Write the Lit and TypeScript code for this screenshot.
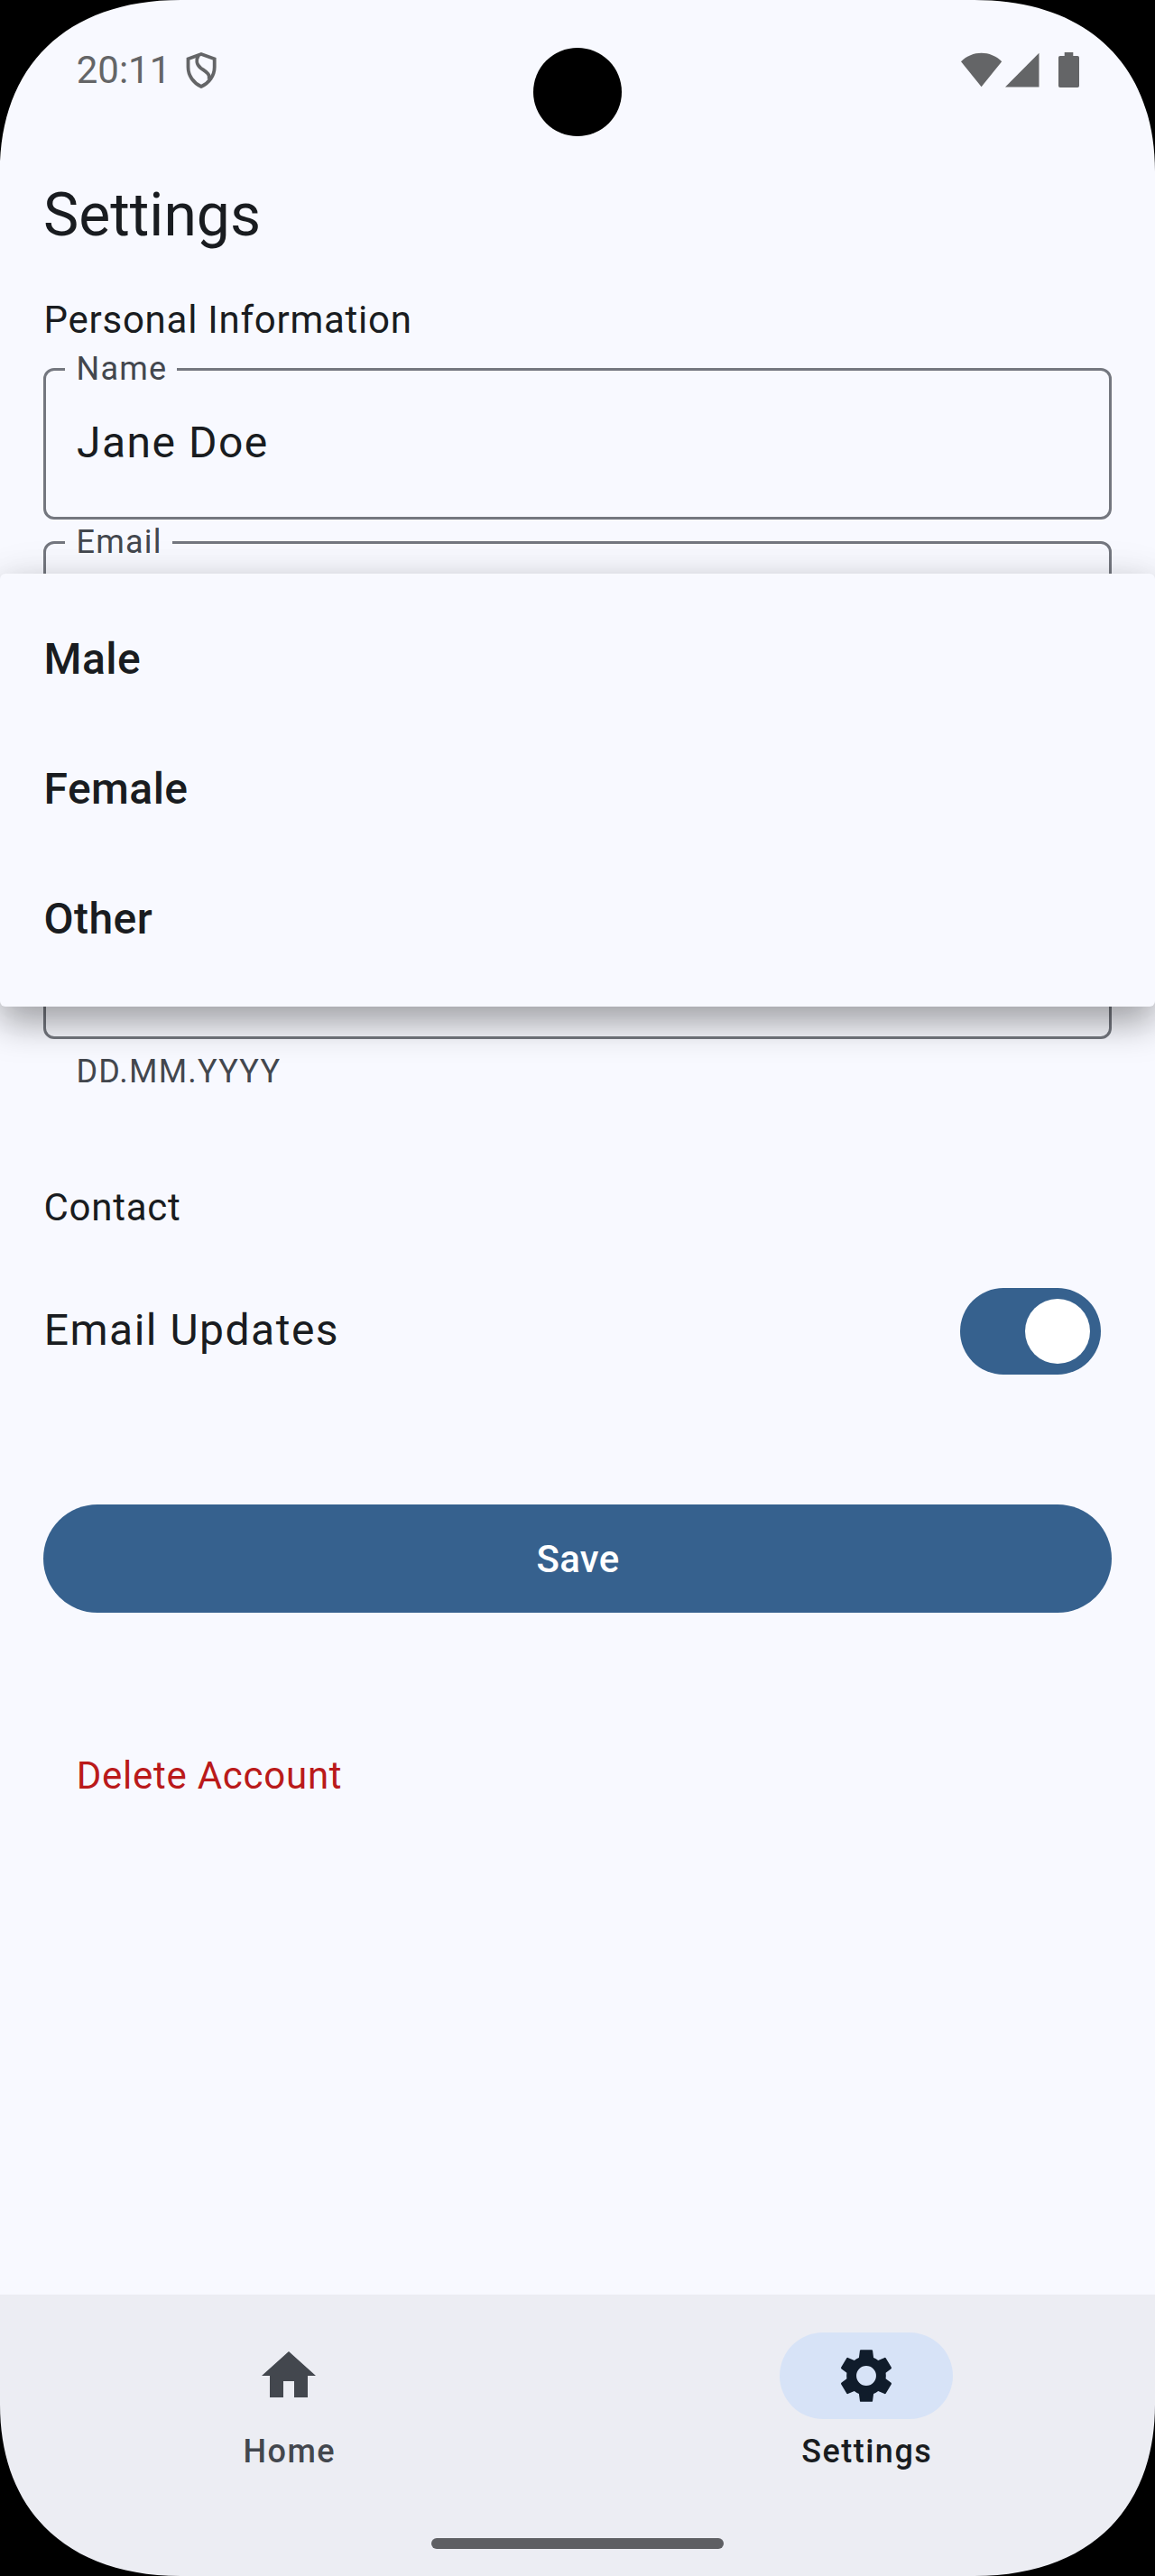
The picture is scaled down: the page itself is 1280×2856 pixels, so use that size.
import { LitElement, html, css, svg, nothing } from "lit";
import { customElement, property } from "lit/decorators.js";

@customElement("outlined-field")
class OutlinedField extends LitElement {
  @property() label = "";
  @property() value = "";
  @property() hint = "";

  static styles = css`
    :host { display: block; }
    .box {
      position: relative;
      box-sizing: border-box;
      height: 168px;
      border: 3px solid #74777f;
      border-radius: 12px;
      padding: 44px 34px 0;
    }
    .label {
      position: absolute;
      left: 21px;
      top: -26px;
      padding: 0 11px 0 12.5px;
      background: #f8f9ff;
      color: #43474e;
      font-size: 36px;
      line-height: 48px;
      letter-spacing: 1.2px;
      white-space: nowrap;
    }
    .value {
      font-size: 48px;
      line-height: 72px;
      letter-spacing: 1.5px;
      color: #191c20;
    }
    .hint {
      padding: 12px 36.5px 0;
      font-size: 36px;
      line-height: 48px;
      letter-spacing: 1.2px;
      color: #43474e;
    }
  `;

  render() {
    return html`
      <div class="box">
        ${this.label ? html`<span class="label">${this.label}</span>` : nothing}
        <div class="value">${this.value}</div>
      </div>
      ${this.hint ? html`<div class="hint">${this.hint}</div>` : nothing}
    `;
  }
}

const cornerPath = svg`<path d="M0 0H200C72 0 0 75 0 190Z" fill="#000" />`;

@customElement("app-root")
class AppRoot extends LitElement {
  static styles = css`
    :host {
      display: block;
      font-family: Roboto, "Liberation Sans", sans-serif;
      color: #191c20;
    }
    .screen {
      position: relative;
      display: flex;
      flex-direction: column;
      width: 1280px;
      height: 2856px;
      overflow: hidden;
      background: #f8f9ff;
    }
    .status {
      display: flex;
      justify-content: space-between;
      box-sizing: border-box;
      height: 156px;
      padding: 48px 84px 0;
      color: #646567;
    }
    .status-left { display: flex; align-items: flex-start; }
    .time { box-sizing: border-box; padding-left: 0.7px; font-size: 42px; line-height: 60px; width: 121px; }
    .shield { margin-top: 9px; }
    .signals { margin-top: 9px; }
    svg { display: block; }
    .camera {
      position: absolute;
      left: 591px;
      top: 53px;
      width: 98px;
      height: 98px;
      border-radius: 50%;
      background: #000;
    }
    .content { flex: 1; padding: 0 48px; }
    .title { margin: 41px 0 0; font-size: 66px; line-height: 84px; font-weight: 400; }
    .section { margin: 0; font-size: 42px; line-height: 60px; font-weight: 400; letter-spacing: 0.75px; padding-left: 0.5px; }
    .personal { margin-top: 44px; }
    .fields { display: flex; flex-direction: column; gap: 24px; margin-top: 23px; }
    .contact { margin-top: 97px; }
    .toggle-row {
      display: flex;
      justify-content: space-between;
      align-items: center;
      height: 96px;
      margin-top: 59px;
      padding-right: 12px;
    }
    .toggle-label { font-size: 48px; line-height: 72px; letter-spacing: 1.5px; padding: 0 0 2px 0.7px; }
    .switch {
      display: flex;
      justify-content: flex-end;
      align-items: center;
      box-sizing: border-box;
      width: 156px;
      height: 96px;
      padding: 12px;
      border-radius: 48px;
      background: #36618e;
    }
    .thumb { width: 72px; height: 72px; border-radius: 50%; background: #fff; }
    .save {
      display: flex;
      align-items: center;
      justify-content: center;
      box-sizing: border-box;
      width: 100%;
      height: 120px;
      margin-top: 144px;
      padding: 2px 0 0 1px;
      border: 0;
      border-radius: 60px;
      background: #36618e;
      color: #fff;
      font: 500 42px/60px Roboto, "Liberation Sans", sans-serif;
      letter-spacing: 0.3px;
    }
    .delete {
      margin-top: 151px;
      padding-left: 36.7px;
      font-size: 42px;
      line-height: 60px;
      letter-spacing: 0.75px;
      color: #ba1a1a;
    }
    .menu {
      position: absolute;
      left: 0;
      right: 0;
      top: 636px;
      height: 480px;
      box-sizing: border-box;
      padding: 24px 0;
      border-radius: 6px;
      background: #f8f9ff;
      box-shadow: 0 18px 40px rgba(0, 0, 0, 0.34), 0 0 50px rgba(0, 0, 0, 0.06);
    }
    .option {
      display: flex;
      align-items: center;
      box-sizing: border-box;
      height: 144px;
      padding: 0 48px 3px 48.5px;
      font-size: 48px;
      line-height: 72px;
      font-weight: 500;
      letter-spacing: 0.45px;
    }
    .nav {
      display: grid;
      grid-template-columns: 1fr 1fr;
      box-sizing: border-box;
      height: 270px;
      padding-top: 42px;
      background: #ecedf3;
    }
    .tab { display: flex; flex-direction: column; align-items: center; gap: 12px; color: #43474e; }
    .tab.active { color: #191c20; }
    .pill {
      display: flex;
      align-items: center;
      justify-content: center;
      width: 192px;
      height: 96px;
      border-radius: 48px;
    }
    .active .pill { background: #d7e3f7; color: #101c2b; }
    .tab-label { font-size: 36px; line-height: 48px; font-weight: 500; letter-spacing: 1.5px; padding-left: 1.5px; }
    .gesture { height: 42px; background: #ecedf3; display: flex; justify-content: center; }
    .handle { width: 324px; height: 12px; border-radius: 6px; background: #5e5f63; }
    .corner { position: absolute; width: 200px; height: 190px; }
    .tl { left: 0; top: 0; }
    .tr { right: 0; top: 0; transform: scaleX(-1); }
    .bl { left: 0; bottom: 0; transform: scaleY(-1); }
    .br { right: 0; bottom: 0; transform: scale(-1); }
  `;

  render() {
    return html`
      <div class="screen">
        <div class="status">
          <div class="status-left">
            <span class="time">20:11</span>
            <svg class="shield" width="36" height="42" viewBox="15 11 36 42" fill="none" stroke="currentColor" stroke-width="3.8">
              <path d="M33 14L47.7 19.3V28.5C47.7 38 41.5 46 33 50C24.500 46 18.500 38 18.500 28.500V19.300Z" />
              <path d="M30 15.500C27.200 20 27.500 25.500 32.500 29.500C38 33.500 43.500 36 41.500 42" />
            </svg>
          </div>
          <svg class="signals" width="134" height="42" viewBox="1062 57 134 42" fill="currentColor">
            <path d="M1065 68.300C1077.500 55.600 1097.700 55.600 1110.200 68.300L1087.600 96.200Z" />
            <path d="M1114 96.500L1151.500 58.700V96.500Z" />
            <path d="M1179.700 58H1189.300V62H1194.200Q1196 62 1196 63.800V95.200Q1196 97 1194.200 97H1174.800Q1173 97 1173 95.200V63.800Q1173 62 1174.800 62H1179.700Z" />
          </svg>
        </div>
        <div class="content">
          <h1 class="title">Settings</h1>
          <h2 class="section personal">Personal Information</h2>
          <div class="fields">
            <outlined-field label="Name" value="Jane Doe"></outlined-field>
            <outlined-field label="Email"></outlined-field>
            <outlined-field></outlined-field>
            <outlined-field hint="DD.MM.YYYY"></outlined-field>
          </div>
          <h2 class="section contact">Contact</h2>
          <div class="toggle-row">
            <span class="toggle-label">Email Updates</span>
            <span class="switch"><span class="thumb"></span></span>
          </div>
          <button class="save">Save</button>
          <div class="delete">Delete Account</div>
        </div>
        <nav class="nav">
          <div class="tab">
            <span class="pill">
              <svg width="72" height="72" viewBox="0 0 24 24" fill="currentColor">
                <path d="M10 20v-6h4v6h5v-8h3L12 3 2 12h3v8z" />
              </svg>
            </span>
            <span class="tab-label">Home</span>
          </div>
          <div class="tab active">
            <span class="pill">
              <svg width="72" height="72" viewBox="-12 -12 24 24" fill="currentColor" fill-rule="evenodd">
                <path d="M-2 -9.600H2Q2.300 -9.600 2.350 -9.300L2.700 -6.700Q3.600 -6.300 4.400 -5.700L6.800 -6.700Q7.100 -6.800 7.250 -6.500L9.300 -3.100Q9.400 -2.800 9.200 -2.600L7.200 -1.100Q7.350 0 7.200 1.100L9.200 2.600Q9.400 2.800 9.300 3.100L7.250 6.500Q7.100 6.800 6.800 6.700L4.400 5.700Q3.600 6.300 2.700 6.700L2.350 9.300Q2.300 9.600 2 9.600H-2Q-2.300 9.600 -2.350 9.300L-2.700 6.700Q-3.600 6.300 -4.400 5.700L-6.800 6.700Q-7.100 6.800 -7.250 6.500L-9.300 3.100Q-9.400 2.800 -9.200 2.600L-7.200 1.100Q-7.350 0 -7.200 -1.100L-9.200 -2.600Q-9.400 -2.800 -9.300 -3.100L-7.250 -6.500Q-7.100 -6.800 -6.800 -6.700L-4.400 -5.700Q-3.600 -6.300 -2.700 -6.700L-2.350 -9.300Q-2.300 -9.600 -2 -9.600ZM0 -3.650A3.650 3.650 0 1 0 0 3.650A3.650 3.650 0 1 0 0 -3.650Z" />
              </svg>
            </span>
            <span class="tab-label">Settings</span>
          </div>
        </nav>
        <div class="gesture"><div class="handle"></div></div>
        <div class="menu">
          ${["Male", "Female", "Other"].map((o) => html`<div class="option">${o}</div>`)}
        </div>
        <div class="camera"></div>
        ${["tl", "tr", "bl", "br"].map(
          (c) => html`<svg class="corner ${c}" viewBox="0 0 200 190">${cornerPath}</svg>`
        )}
      </div>
    `;
  }
}
